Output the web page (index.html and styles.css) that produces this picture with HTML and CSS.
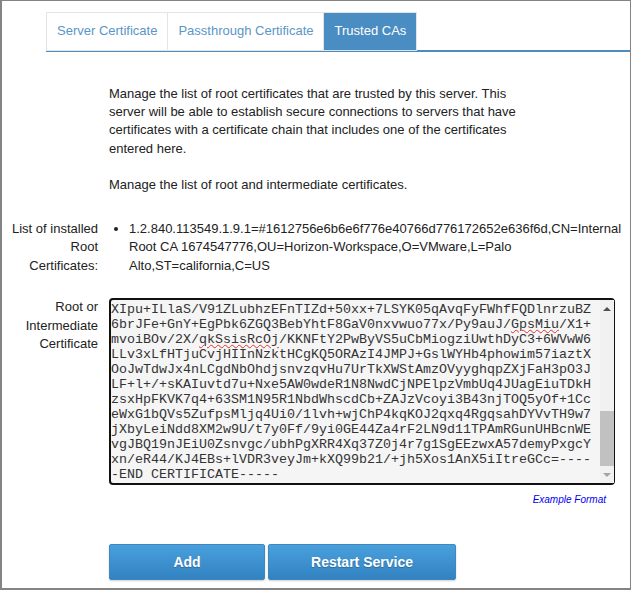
FILE: index.html
```html
<!DOCTYPE html>
<html lang="en">
<head>
<meta charset="utf-8">
<title>Trusted CAs</title>
<link rel="stylesheet" href="styles.css">
</head>
<body>
<div class="page">
  <nav class="tabs">
    <a class="tab">Server Certificate</a>
    <a class="tab tab-middle">Passthrough Certificate</a>
    <a class="tab active">Trusted CAs</a>
  </nav>
  <section class="intro">
    <p>Manage the list of root certificates that are trusted by this server. This server will be able to establish secure connections to servers that have certificates with a certificate chain that includes one of the certificates entered here.</p>
    <p>Manage the list of root and intermediate certificates.</p>
  </section>
  <div class="row installed">
    <div class="label">List of installed Root Certificates:</div>
    <ul class="certs">
      <li>1.2.840.113549.1.9.1=#1612756e6b6e6f776e40766d776172652e636f6d,CN=Internal Root CA 1674547776,OU=Horizon-Workspace,O=VMware,L=Palo Alto,ST=california,C=US</li>
    </ul>
  </div>
  <div class="row entry">
    <div class="label">Root or Intermediate Certificate</div>
    <div class="field">
      <div class="cert-text">
        <div>XIpu+ILlaS/V91ZLubhzEFnTIZd+50xx+7LSYK05qAvqFyFWhfFQDlnrzuBZ</div>
        <div>6brJFe+GnY+EgPbk6ZGQ3BebYhtF8GaV0nxvwuo77x/Py9auJ/<span class="typo">GpsMiu</span>/X1+</div>
        <div>mvoiBOv/2X/<span class="typo">qkSsisRcOj</span>/KKNFtY2PwByVS5uCbMiogziUwthDyC3+6WVwW6</div>
        <div>LLv3xLfHTjuCvjHIInNzktHCgKQ5ORAzI4JMPJ+GslWYHb4phowim57iaztX</div>
        <div>OoJwTdwJx4nLCgdNbOhdjsnvzqvHu7UrTkXWStAmzOVyyghqpZXjFaH3pO3J</div>
        <div>LF+l+/+sKAIuvtd7u+Nxe5AW0wdeR1N8NwdCjNPElpzVmbUq4JUagEiuTDkH</div>
        <div>zsxHpFKVK7q4+63SM1N95R1NbdWhscdCb+ZAJzVcoyi3B43njTOQ5yOf+1Cc</div>
        <div>eWxG1bQVs5ZufpsMljq4Ui0/1lvh+wjChP4kqKOJ2qxq4RgqsahDYVvTH9w7</div>
        <div>jXbyLeiNdd8XM2w9U/t7y0Ff/9yi0GE44Za4rF2LN9d11TPAmRGunUHBcnWE</div>
        <div>vgJBQ19nJEiU0Zsnvgc/ubhPgXRR4Xq37Z0j4r7g1SgEEzwxA57demyPxgcY</div>
        <div>xn/eR44/KJ4EBs+lVDR3veyJm+kXQ99b21/+jh5Xos1AnX5iItreGCc=----</div>
        <div>-END CERTIFICATE-----</div>
      </div>
      <div class="scrollbar">
        <span class="arrow up"></span>
        <span class="track"><span class="thumb"></span></span>
        <span class="arrow down"></span>
      </div>
    </div>
  </div>
  <div class="example"><a>Example Format</a></div>
  <div class="actions">
    <button class="btn add">Add</button>
    <button class="btn restart">Restart Service</button>
  </div>
</div>
</body>
</html>
```
FILE: styles.css
```css
* { box-sizing: border-box; }
html, body { margin: 0; padding: 0; height: 100%; }
body {
  background: #fff;
  font-family: "Liberation Sans", Arial, sans-serif;
  font-size: 13px;
  color: #222;
  overflow: hidden;
}
.page {
  width: 631px;
  height: 590px;
  border: solid #848484;
  border-width: 1px 1px 2px 2px;
  padding: 11px 0 0 44px;
  overflow: hidden;
}
.tabs {
  display: flex;
  width: 584px;
  height: 40px;
  border-bottom: 2px solid #4a8dc2;
}
.tab {
  display: block;
  height: 39px;
  padding: 9px 10px 0;
  border: 1px solid #e2e5e8;
  border-right-width: 0;
  color: #5a96c8;
  line-height: 18px;
}
.tab-middle { padding-right: 9px; }
.tab.active {
  background: #4a8dc2;
  color: #fff;
  border-right-width: 1px;
  padding-left: 11px;
}
.intro {
  width: 410px;
  margin: 33px 0 0 63px;
  line-height: 18.2px;
}
.intro p { margin: 0 0 18px; }
.row { display: flex; }
.label {
  flex: none;
  width: 88px;
  margin-left: -36px;
  text-align: right;
  line-height: 18.4px;
}
.installed { margin-top: 26px; }
.certs {
  margin: 0;
  padding: 0 0 0 31px;
  width: 530px;
  line-height: 18.4px;
}
.entry { margin-top: 23px; }
.field {
  flex: none;
  display: flex;
  width: 506px;
  height: 187px;
  margin-left: 11px;
  border: 2px solid #111;
  border-radius: 4px;
  background: #f5f5f5;
}
.cert-text {
  flex: 1;
  padding: 2px 0 0 0;
  font-family: "Liberation Mono", "Courier New", monospace;
  font-size: 13.33px;
  line-height: 15px;
  white-space: nowrap;
  color: #333;
}
.typo { text-decoration: underline wavy #e03030 1px; }
.scrollbar {
  flex: none;
  width: 14px;
  display: flex;
  flex-direction: column;
  background: #f1f1f1;
  margin-right: -1px;
}
.arrow {
  flex: none;
  height: 17px;
  display: flex;
  align-items: center;
  justify-content: center;
}
.arrow::before {
  content: "";
  border-left: 4px solid transparent;
  border-right: 4px solid transparent;
}
.up::before { border-bottom: 4px solid #505050; }
.down::before { border-top: 4px solid #a3a3a3; }
.track { flex: 1; display: flex; flex-direction: column; justify-content: flex-end; }
.thumb { display: block; height: 55px; background: #c1c1c1; }
.example {
  width: 560px;
  margin-top: 8px;
  text-align: right;
  font-size: 10px;
  font-style: italic;
  line-height: 14px;
  color: #0000f0;
}
.actions {
  display: flex;
  gap: 3px;
  margin: 37px 0 0 63px;
}
.btn {
  height: 36px;
  border: 1px solid #3f87bf;
  border-radius: 2px;
  background: linear-gradient(#49a0dc, #3282c1);
  color: #fff;
  font-family: inherit;
  font-size: 14px;
  font-weight: bold;
  text-shadow: 0 1px 1px rgba(0, 0, 0, .25);
  box-shadow: 0 1px 2px rgba(0, 0, 0, .2);
  padding: 0;
}
.add { width: 156px; }
.restart { width: 188px; }
```
